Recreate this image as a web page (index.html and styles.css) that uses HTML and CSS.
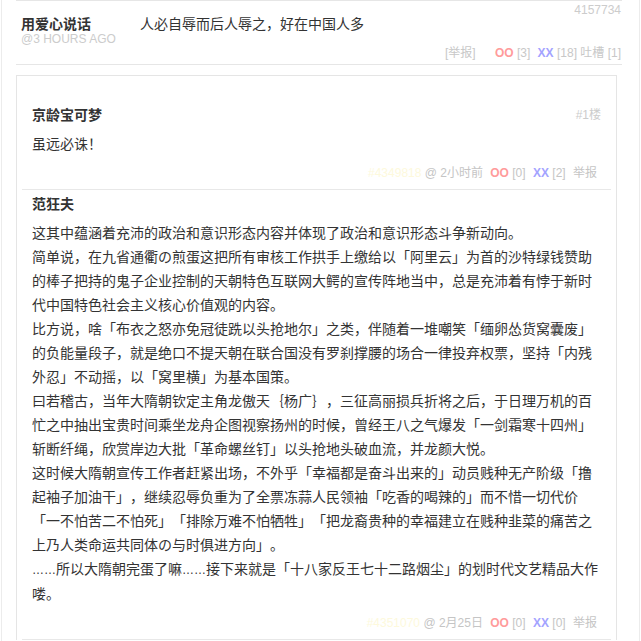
FILE: index.html
```html
<!DOCTYPE html>
<html lang="zh-CN">
<head>
    <meta charset="UTF-8">
    <meta name="viewport" content="width=device-width, initial-scale=1.0">
    <title>用爱心说话</title>
    <link rel="stylesheet" href="styles.css">
</head>
<body>
    <div class="wrap">
        <div class="item">
            <div class="item-id">4157734</div>
            <div class="item-main">
                <div class="author">
                    <div class="author-name">用爱心说话</div>
                    <div class="author-time">@3 hours ago</div>
                </div>
                <div class="item-text">人必自辱而后人辱之，好在中国人多</div>
            </div>
            <div class="item-foot">
                <span class="report">[举报]</span>
                <span class="oo">OO</span> [3]
                <span class="xx">XX</span> [18]
                吐槽 [1]
            </div>
        </div>

        <div class="comments">
            <div class="comment">
                <div class="comment-head">
                    <span class="comment-name">京龄宝可梦</span>
                    <span class="floor">#1楼</span>
                </div>
                <div class="comment-body">
                    <p>虽远必诛！</p>
                </div>
                <div class="comment-foot">
                    <span class="cid">#4349818</span> @ 2小时前
                    <span class="oo">OO</span> [0]
                    <span class="xx">XX</span> [2]
                    <span class="rep">举报</span>
                </div>
            </div>
            <div class="comment">
                <div class="comment-head">
                    <span class="comment-name">范狂夫</span>
                </div>
                <div class="comment-body">
                    <p>这其中蕴涵着充沛的政治和意识形态内容并体现了政治和意识形态斗争新动向。</p>
                    <p>简单说，在九省通衢の煎蛋这把所有审核工作拱手上缴给以「阿里云」为首的沙特绿钱赞助的棒子把持的鬼子企业控制的天朝特色互联网大鳄的宣传阵地当中，总是充沛着有悖于新时代中国特色社会主义核心价值观的内容。</p>
                    <p>比方说，啥「布衣之怒亦免冠徒跣以头抢地尔」之类，伴随着一堆嘲笑「缅卵怂货窝囊废」的负能量段子，就是绝口不提天朝在联合国没有罗刹撑腰的场合一律投弃权票，坚持「内残外忍」不动摇，以「窝里横」为基本国策。</p>
                    <p>曰若稽古，当年大隋朝钦定主角龙傲天｛杨广｝，三征高丽损兵折将之后，于日理万机的百忙之中抽出宝贵时间乘坐龙舟企图视察扬州的时候，曾经王八之气爆发「一剑霜寒十四州」斩断纤绳，欣赏岸边大批「革命螺丝钉」以头抢地头破血流，并龙颜大悦。</p>
                    <p>这时候大隋朝宣传工作者赶紧出场，不外乎「幸福都是奋斗出来的」动员贱种无产阶级「撸起袖子加油干」，继续忍辱负重为了全票冻蒜人民领袖「吃香的喝辣的」而不惜一切代价「一不怕苦二不怕死」「排除万难不怕牺牲」「把龙裔贵种的幸福建立在贱种韭菜的痛苦之上乃人类命运共同体の与时俱进方向」。</p>
                    <p><span class="dots">……</span>所以大隋朝完蛋了嘛<span class="dots">……</span>接下来就是「十八家反王七十二路烟尘」的划时代文艺精品大作喽。</p>
                </div>
                <div class="comment-foot">
                    <span class="cid">#4351070</span> @ 2月25日
                    <span class="oo">OO</span> [0]
                    <span class="xx">XX</span> [0]
                    <span class="rep">举报</span>
                </div>
            </div>
        </div>
    </div>
</body>
</html>
```

FILE: styles.css
```css
body {
    margin: 0;
    font-family: 'Liberation Sans', 'Noto Sans CJK SC', sans-serif;
    color: #333;
    background-color: #fff;
    text-spacing-trim: space-all;
}
.wrap {
    width: 639px;
    box-sizing: border-box;
    margin-left: 1px;
    min-height: 100vh;
    border-left: 1px solid #ececec;
    border-right: 1px solid #ececec;
    padding: 0 17px 0 14px;
}
.item {
    border-top: 1px solid #e6e6e6;
    border-bottom: 1px solid #e6e6e6;
    padding: 2px 1px 4px 5px;
}
.item-id {
    text-align: right;
    font-size: 12px;
    line-height: 14px;
    color: #ccc;
}
.item-main {
    display: flex;
}
.author {
    width: 119px;
    flex-shrink: 0;
}
.author-name {
    font-size: 14px;
    font-weight: bold;
    line-height: 14px;
}
.author-time {
    font-size: 12px;
    line-height: 16px;
    color: #ccc;
    text-transform: uppercase;
}
.item-text {
    font-size: 14px;
    line-height: 14px;
}
.item-foot {
    margin-top: -1px;
    text-align: right;
    font-size: 12px;
    line-height: 14px;
    color: #c8c8c8;
}
.item-foot .report {
    margin-right: 12px;
}
.oo {
    color: #ff9b9b;
    font-weight: bold;
    margin-left: 4px;
}
.xx {
    color: #a3a3ff;
    font-weight: bold;
    margin-left: 4px;
}
.comments {
    margin: 10px 5px 0 0;
    border: 1px solid #e5e5e5;
    border-bottom: none;
    padding: 25px 5px 0;
}
.comment {
    border-bottom: 1px solid #e8e8e8;
    padding: 4px 10px 6px;
}
.comment-head {
    display: flex;
    justify-content: space-between;
    align-items: center;
    line-height: 20px;
}
.comment-name {
    font-size: 14px;
    font-weight: bold;
}
.floor {
    font-size: 12px;
    color: #ccc;
}
.comment-body {
    margin-top: 7px;
    font-size: 14px;
    line-height: 24px;
}
.comment-body p {
    margin: 0;
}
.comment-body .dots {
    font-size: 12px;
}
.comment-foot {
    margin-top: 7px;
    padding-right: 4px;
    text-align: right;
    font-size: 12px;
    line-height: 20px;
    color: #c5c5c5;
}
.cid {
    color: #fdf9dc;
}
.rep {
    margin-left: 4px;
}
```
